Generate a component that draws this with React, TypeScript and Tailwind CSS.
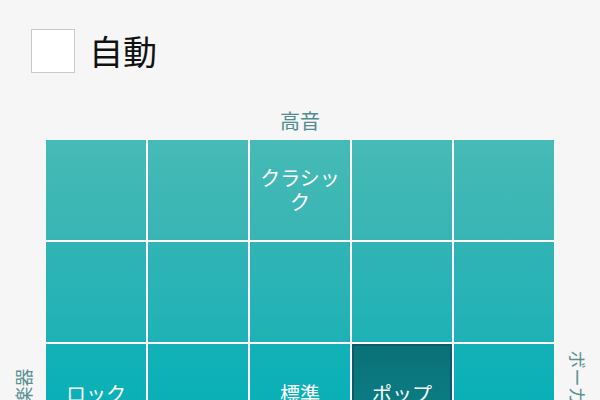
import React from "react";

const rows: { cls: string; cells: string[] }[] = [
  { cls: "bg-gradient-to-b from-[#46bab6] to-[#37b5b4]", cells: ["", "", "クラシック", "", ""] },
  { cls: "bg-gradient-to-b from-[#31b4b5] to-[#1db2b6]", cells: ["", "", "", "", ""] },
  { cls: "bg-gradient-to-b from-[#12b1b7] to-[#03afb8]", cells: ["ロック", "", "標準", "ポップ", ""] },
  { cls: "bg-gradient-to-b from-[#02aeb8] to-[#00acb8]", cells: ["", "", "", "", ""] },
  { cls: "bg-gradient-to-b from-[#00abb8] to-[#00a9b8]", cells: ["", "", "", "", ""] },
];

export default function App() {
  const font = { fontFamily: '"Noto Sans CJK JP", "Noto Sans", sans-serif' };
  return (
    <div className="w-[600px] h-[400px] overflow-hidden bg-[#f6f6f6]" style={font}>
      <div className="h-[100px] flex items-start pt-[29px] pl-[31px] gap-[14px]">
        <div className="w-[44px] h-[44px] bg-white border-[1.5px] border-[#c9c9c9]"></div>
        <div className="text-[34px] leading-[44px] text-[#111]">自動</div>
      </div>
      <div className="h-[40px] flex justify-center pt-[7px]">
        <span className="text-[20px] leading-[28px] text-[#4f8b90]">高音</span>
      </div>
      <div className="flex">
        <div className="w-[46px] flex items-center justify-center pb-4">
          <span className="-rotate-90 whitespace-nowrap text-[18px] text-[#5a8f94]">楽器</span>
        </div>
        <div className="w-[508px] flex flex-col gap-[2px] bg-white">
          {rows.map((r, i) => (
            <div key={i} className="flex gap-[2px]">
              {r.cells.map((c, j) => {
                const sel = c === "ポップ";
                return (
                  <div
                    key={j}
                    className={
                      "w-[100px] h-[100px] flex items-center justify-center px-2 text-center text-white text-[20px] leading-[24px] " +
                      (sel
                        ? "bg-gradient-to-b from-[#0a7178] to-[#0b8389] border-2 border-[#0a5d65]"
                        : r.cls)
                    }
                  >
                    {c}
                  </div>
                );
              })}
            </div>
          ))}
        </div>
        <div className="w-[46px] flex items-center justify-center pb-4">
          <span className="rotate-90 whitespace-nowrap text-[18px] text-[#5a8f94]">ボーカル</span>
        </div>
      </div>
    </div>
  );
}
